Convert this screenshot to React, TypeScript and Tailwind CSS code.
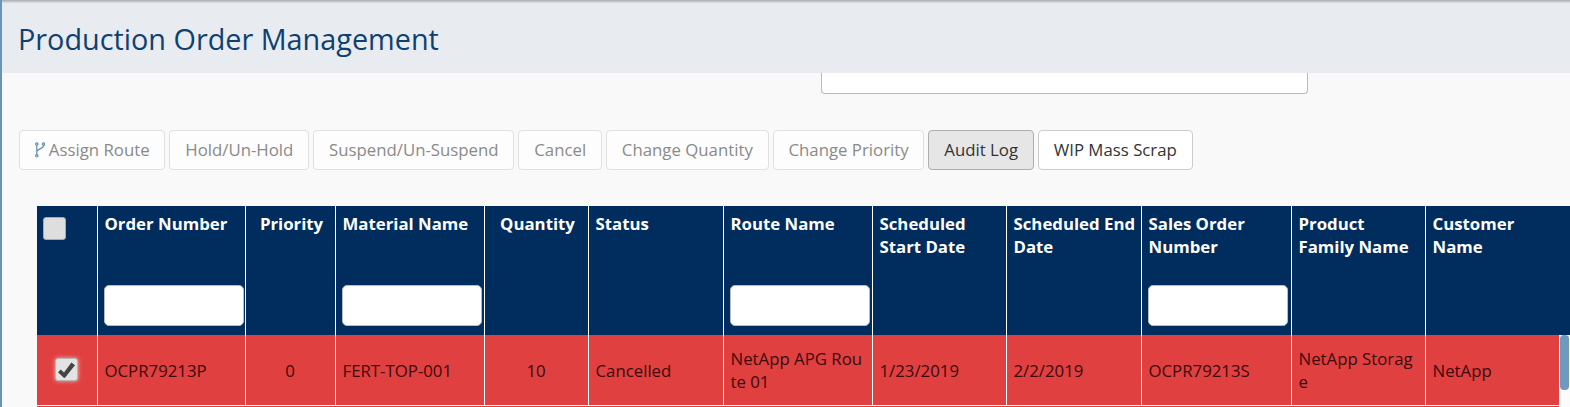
import React from "react";

const columns = [
    { label: "Order Number", width: 148, filter: true },
    { label: "Priority", width: 90, center: true },
    { label: "Material Name", width: 149, filter: true },
    { label: "Quantity", width: 104, center: true },
    { label: "Status", width: 135 },
    { label: "Route Name", width: 149, filter: true },
    { label: "Scheduled Start Date", width: 134 },
    { label: "Scheduled End Date", width: 135 },
    { label: "Sales Order Number", width: 150, filter: true },
    { label: "Product Family Name", width: 134 },
    { label: "Customer Name", width: 146 },
];

const row = [
    "OCPR79213P",
    "0",
    "FERT-TOP-001",
    "10",
    "Cancelled",
    "NetApp APG Route 01",
    "1/23/2019",
    "2/2/2019",
    "OCPR79213S",
    "NetApp Storage",
    "NetApp",
];

const buttons = [
    "Assign Route",
    "Hold/Un-Hold",
    "Suspend/Un-Suspend",
    "Cancel",
    "Change Quantity",
    "Change Priority",
];

const RouteIcon = () => (
    <svg
        width="10"
        height="16"
        viewBox="0 0 10 16"
        fill="none"
        stroke="#5f8bb5"
        strokeWidth="1.2"
        className="mr-[4px]"
    >
        <circle cx="1.8" cy="2" r="1.2" />
        <circle cx="1.8" cy="13.8" r="1.2" />
        <circle cx="8.6" cy="2" r="1.2" />
        <path d="M1.8 3.2V12.6M8.6 3.2C8.6 6.5 4.5 6.2 2 9" />
    </svg>
);

const CheckMark = () => (
    <svg width="17" height="16" viewBox="0 0 17 16" fill="#444">
        <path d="M0 10.2L2.8 7.4L6 10.4L13.4 0.6L17 3.2L7.2 15.6C6.8 16.1 6 16.1 5.5 15.6Z" />
    </svg>
);

export default function App() {
    return (
        <div className="h-[407px] w-[1570px] overflow-hidden bg-[#f9f9f9] border-l-2 border-[#6a93b8] font-['Open_Sans',sans-serif] relative">
            <div className="h-[3px] bg-gradient-to-b from-[#a9adb3] to-[#dfe2e7]" />
            <div className="h-[70px] bg-[#e8ebf0] pl-[16px] pt-[17px]">
                <h1 className="text-[28.8px] leading-[38px] text-[#0f4170]">Production Order Management</h1>
            </div>

            <div className="ml-[819px] w-[487px] h-[21px] bg-white border border-t-0 border-[#b9b9b9] rounded-b-[4px]" />

            <div className="flex gap-[4px] ml-[17px] mt-[36px] text-[16.8px]">
                {buttons.map((label, i) => (
                    <button
                        key={label}
                        className="h-[40px] flex items-center px-[14.85px] bg-white/60 border border-[#e0e0e0] rounded-[4px] text-[#8a8a8a]"
                    >
                        {i === 0 && <RouteIcon />}
                        {label}
                    </button>
                ))}
                <button className="h-[40px] px-[14.85px] bg-[#e6e6e6] border border-[#adadad] rounded-[4px] text-[#333]">
                    Audit Log
                </button>
                <button className="h-[40px] px-[14.85px] bg-white border border-[#ccc] rounded-[4px] text-[#333]">
                    WIP Mass Scrap
                </button>
            </div>

            <table className="table-fixed border-collapse ml-[35px] mt-[36px] w-[1533px] text-[16.8px] leading-[23px]">
                <colgroup>
                    <col className="w-[60px]" />
                    {columns.map((c) => (
                        <col key={c.label} style={{ width: c.width }} />
                    ))}
                </colgroup>
                <thead>
                    <tr className="bg-[#012c5e] text-white h-[129px]">
                        <th className="align-top pl-[6px] pt-[11px] border-r border-white">
                            <div className="w-[23px] h-[23px] bg-[#dedede] border border-[#aaa] rounded-[3px]" />
                        </th>
                        {columns.map((c, i) => (
                            <th
                                key={c.label}
                                className={`relative align-top pl-[7px] pr-[4px] pt-[6px] font-bold border-white ${
                                    c.center ? "text-center" : "text-left"
                                } ${i === columns.length - 1 ? "" : "border-r"}`}
                            >
                                {c.label}
                                {c.filter && (
                                    <input className="absolute left-[6px] top-[79px] block w-[140px] h-[41px] bg-white border border-[#bbb] rounded-[5px]" />
                                )}
                            </th>
                        ))}
                    </tr>
                </thead>
                <tbody className="text-[#3a0a0c]">
                    <tr className="bg-[#e04040] h-[70px] border-b border-white">
                        <td className="border-r border-white">
                            <div className="ml-[18px] w-[23px] h-[23px] bg-[#e3e3e3] border border-[#b5b5b5] rounded-[3px] shadow-[0_0_4px_#ffffff99] flex items-center justify-center">
                                <CheckMark />
                            </div>
                        </td>
                        {row.map((v, i) => (
                            <td
                                key={i}
                                className={`px-[7px] pt-[1px] break-all border-white ${
                                    columns[i].center ? "text-center" : ""
                                } ${i === row.length - 1 ? "" : "border-r"}`}
                            >
                                {v}
                            </td>
                        ))}
                    </tr>
                    <tr className="bg-[#e04040] h-[70px]">
                        <td colSpan={12} />
                    </tr>
                </tbody>
            </table>

            {/* scrollbar over the body rows */}
            <div className="absolute left-[1557px] top-[335px] bottom-0 w-[11px] bg-[#fbfbfb]">
                <div className="ml-[1px] w-[9px] h-[55px] rounded-[4px] bg-[#6f9abf]" />
            </div>
        </div>
    );
}
